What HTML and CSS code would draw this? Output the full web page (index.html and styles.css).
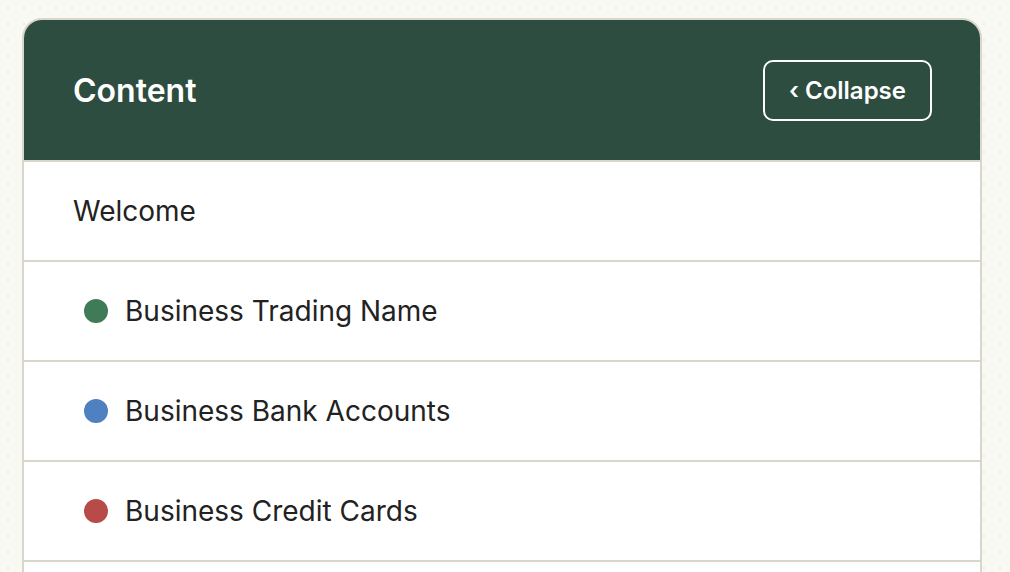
FILE: index.html
```html
<!DOCTYPE html>
<html lang="en">

<head>
    <meta charset="UTF-8">
    <meta name="viewport" content="width=device-width, initial-scale=1.0">
    <title>Content</title>

    <link rel="stylesheet" href="styles.css">

</head>

<body>

    <div class="panel">
        <div class="panel-head">
            <h2> Content </h2>
            <button class="collapse-btn"> &lsaquo; Collapse </button>
        </div>
        <ul class="items">
            <li class="item welcome"> Welcome </li>
            <li class="item"><span class="dot green"></span> Business Trading Name </li>
            <li class="item"><span class="dot blue"></span> Business Bank Accounts </li>
            <li class="item"><span class="dot red"></span> Business Credit Cards </li>
        </ul>
    </div>

</body>

</html>
```

FILE: styles.css
```css
body {
    margin: 0;
    background-color: #f9f9f4;
    background-image: radial-gradient(#ecece4 1px, transparent 1px);
    background-size: 16px 16px;
    font-family: Inter, "Noto Sans", sans-serif;
    color: #222;
}

.panel {
    box-sizing: border-box;
    width: 960px;
    margin: 18px 0 0 22px;
    border: 2px solid #dad7ca;
    border-radius: 20px;
    background: white;
    overflow: hidden;
}

.panel-head {
    display: flex;
    justify-content: space-between;
    align-items: center;
    height: 142px;
    padding: 0 48px 0 49px;
    background-color: #2d4d40;
    border-bottom: 2px solid #dad7ca;
    box-sizing: border-box;
}

.panel-head h2 {
    margin: 0;
    color: white;
    font-size: 32px;
    font-weight: 600;
}

.collapse-btn {
    height: 61px;
    width: 169px;
    padding: 0;
    border: 2px solid white;
    border-radius: 10px;
    background: transparent;
    color: white;
    font-family: Inter, "Noto Sans", sans-serif;
    font-size: 24px;
    font-weight: 600;
}

.items {
    list-style: none;
    margin: 0;
    padding: 0 0 40px;
}

.item {
    display: flex;
    align-items: center;
    gap: 17px;
    height: 100px;
    box-sizing: border-box;
    padding-left: 60px;
    border-bottom: 2px solid #dad7ca;
    font-size: 28px;
}

.item.welcome {
    padding-left: 49px;
}

.dot {
    width: 24px;
    height: 24px;
    border-radius: 50%;
}

.green {
    background-color: #3e7b56;
}

.blue {
    background-color: #4f80c0;
}

.red {
    background-color: #b84b47;
}
```
